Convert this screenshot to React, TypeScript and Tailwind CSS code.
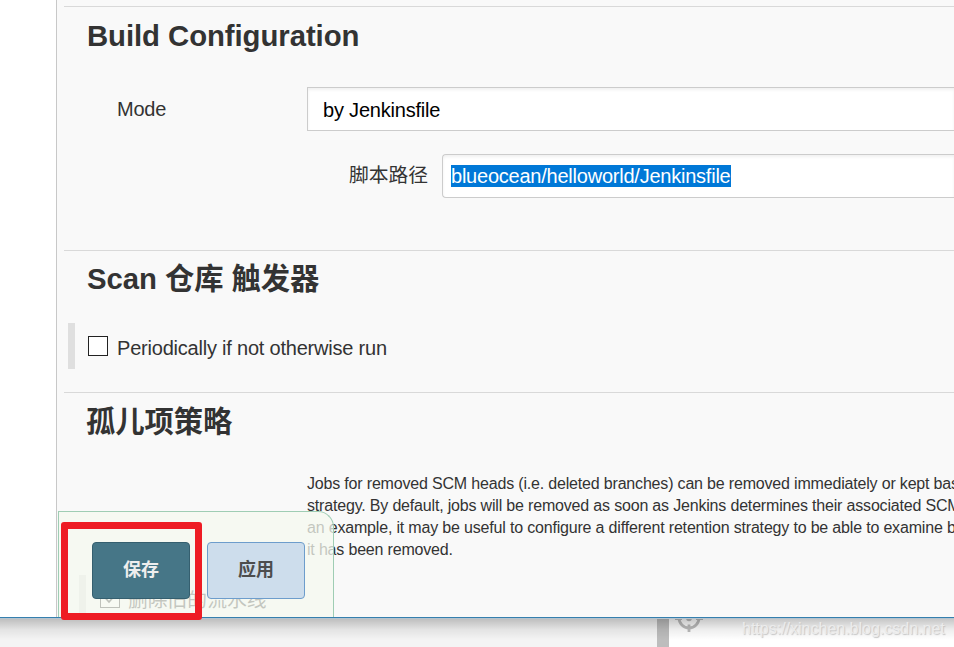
import type { ReactNode } from "react";

function Heading({ children, className = "" }: { children: ReactNode; className?: string }) {
  return (
    <h2 className={`whitespace-nowrap text-[29.33px] leading-[36px] font-bold tracking-[-0.07px] text-[#333] ${className}`}>
      {children}
    </h2>
  );
}

function BuildConfiguration() {
  return (
    <section className="ml-[7px] h-[244px] border-t border-[#d9d9d9]">
      <Heading className="mt-[11px] ml-[23px]">Build Configuration</Heading>
      <div className="mt-[33px] flex h-11">
        <label className="w-[243px] shrink-0 pl-[53px] text-[20px] leading-[44px] tracking-[-0.25px]">Mode</label>
        <div className="h-11 flex-1 border border-r-0 border-[#ccc] bg-white pl-[15px] text-[20px] leading-[44px] tracking-[-0.2px] text-black shadow-[inset_0_2px_3px_rgba(0,0,0,0.06)]">
          by Jenkinsfile
        </div>
      </div>
      <div className="mt-[23px] flex h-11">
        <label className="w-[378px] shrink-0 pl-[285px] text-[19.8px] leading-[42px]">脚本路径</label>
        <div className="h-11 flex-1 rounded-l-[4px] border border-r-0 border-[#ccc] bg-white pt-[10px] pl-2 text-[20px] text-white shadow-[inset_0_2px_3px_rgba(0,0,0,0.06)]">
          <span className="block h-[22px] w-[280px] bg-[#0078d7] leading-[22px] tracking-[-0.23px] whitespace-nowrap">
            blueocean/helloworld/Jenkinsfile
          </span>
        </div>
      </div>
    </section>
  );
}

function Triggers() {
  return (
    <section className="ml-[7px] h-[142px] border-t border-[#d9d9d9]">
      <Heading className="mt-[10px] ml-[23px]">Scan 仓库 触发器</Heading>
      <div className="mt-[26px] ml-1 flex h-[46px] border-l-[7px] border-[#dfdfdf] pl-[13px]">
        <span className="mt-[13px] h-5 w-5 shrink-0 border border-[#222] bg-white" />
        <span className="ml-[9px] text-[20px] leading-[50px] tracking-[-0.21px] whitespace-nowrap">Periodically if not otherwise run</span>
      </div>
    </section>
  );
}

function OrphanedItems() {
  return (
    <section className="ml-[7px] h-[225px] overflow-hidden border-t border-[#d9d9d9]">
      <Heading className="mt-[11px] ml-[22px]">孤儿项策略</Heading>
      <div className="mt-[33px] ml-[243px] text-[16px] leading-[22px] tracking-[-0.18px] whitespace-nowrap">
        <p>Jobs for removed SCM heads (i.e. deleted branches) can be removed immediately or kept bas</p>
        <p>strategy. By default, jobs will be removed as soon as Jenkins determines their associated SCM</p>
        <p>an example, it may be useful to configure a different retention strategy to be able to examine b</p>
        <p>it has been removed.</p>
      </div>
      <div className="mt-[14px] ml-[15px] flex h-[46px] border-l-[7px] border-[#dfdfdf] pl-[14px]">
        <svg viewBox="0 0 20 20" className="mt-[13px] h-5 w-5 shrink-0" fill="#fff" stroke="#222">
          <rect x=".5" y=".5" width="19" height="19" />
          <path d="M4.5 9l4.5 5 7-8" fill="none" strokeWidth="1.7" />
        </svg>
        <span className="ml-[8px] text-[19.8px] leading-[50px] whitespace-nowrap">删除旧的流水线</span>
      </div>
    </section>
  );
}

function SaveBar() {
  return (
    <div className="absolute top-[511px] left-[58px] flex h-[106px] w-[276px] gap-[17px] rounded-tr-[16px] border border-b-0 border-[#9fcdb4] bg-[#f4f8ef]/75 bg-clip-padding pt-[30px] pl-[33px]">
      <button className="h-[57px] w-[98px] rounded-[4px] border border-[#355f6f] bg-[#467687] text-[18px] font-bold text-[#eee]">
        保存
      </button>
      <button className="h-[57px] w-[98px] rounded-[4px] border border-[#6d9dcc] bg-[#cdddec] text-[18px] font-bold text-[#4d4d4d]">
        应用
      </button>
    </div>
  );
}

function Desktop() {
  return (
    <footer className="relative flex h-[29px] overflow-hidden bg-white">
      <div className="w-[657px] bg-[#f4f4f4]" />
      <div className="w-3 bg-[#bdbdbd]" />
      <svg viewBox="0 0 28 28" className="-mt-[12px] ml-[6px] h-[28px] w-[28px]" fill="none" stroke="#bdbdbd" strokeWidth="2.8">
        <circle cx="14" cy="12" r="10" />
        <circle cx="14" cy="12.5" r="2.8" fill="#bdbdbd" stroke="none" />
        <path d="M14 18.5v7.5M0 12.5h7M21 12.5h7" />
      </svg>
      <div className="absolute inset-x-0 top-0 h-[22px] border-t border-[#b4c4d0] bg-gradient-to-b from-black/22 via-black/7 to-transparent" />
      <span className="absolute top-0 left-[742px] text-[16px] leading-[22px] whitespace-nowrap text-[#ececec] [text-shadow:1px_1px_1px_#c4c4c4]">
        https://xinchen.blog.csdn.net
      </span>
    </footer>
  );
}

export default function App() {
  return (
    <div className="relative h-[647px] w-[954px] overflow-hidden bg-white font-['Liberation_Sans','Noto_Sans_CJK_SC',sans-serif] text-[#333]">
      <main className="flex h-[617px]">
        <div className="w-14 shrink-0" />
        <div className="flex-1 overflow-hidden border-l border-[#c8c8c8] bg-[#f9f9f9] pt-[6px]">
          <BuildConfiguration />
          <Triggers />
          <OrphanedItems />
        </div>
      </main>
      <div className="h-px bg-[#357fae]" />
      <Desktop />
      <SaveBar />
      <div className="absolute top-[522px] left-[61px] h-[98px] w-[141px] rounded-[3px] border-[7px] border-[#ee1c24]" />
    </div>
  );
}
